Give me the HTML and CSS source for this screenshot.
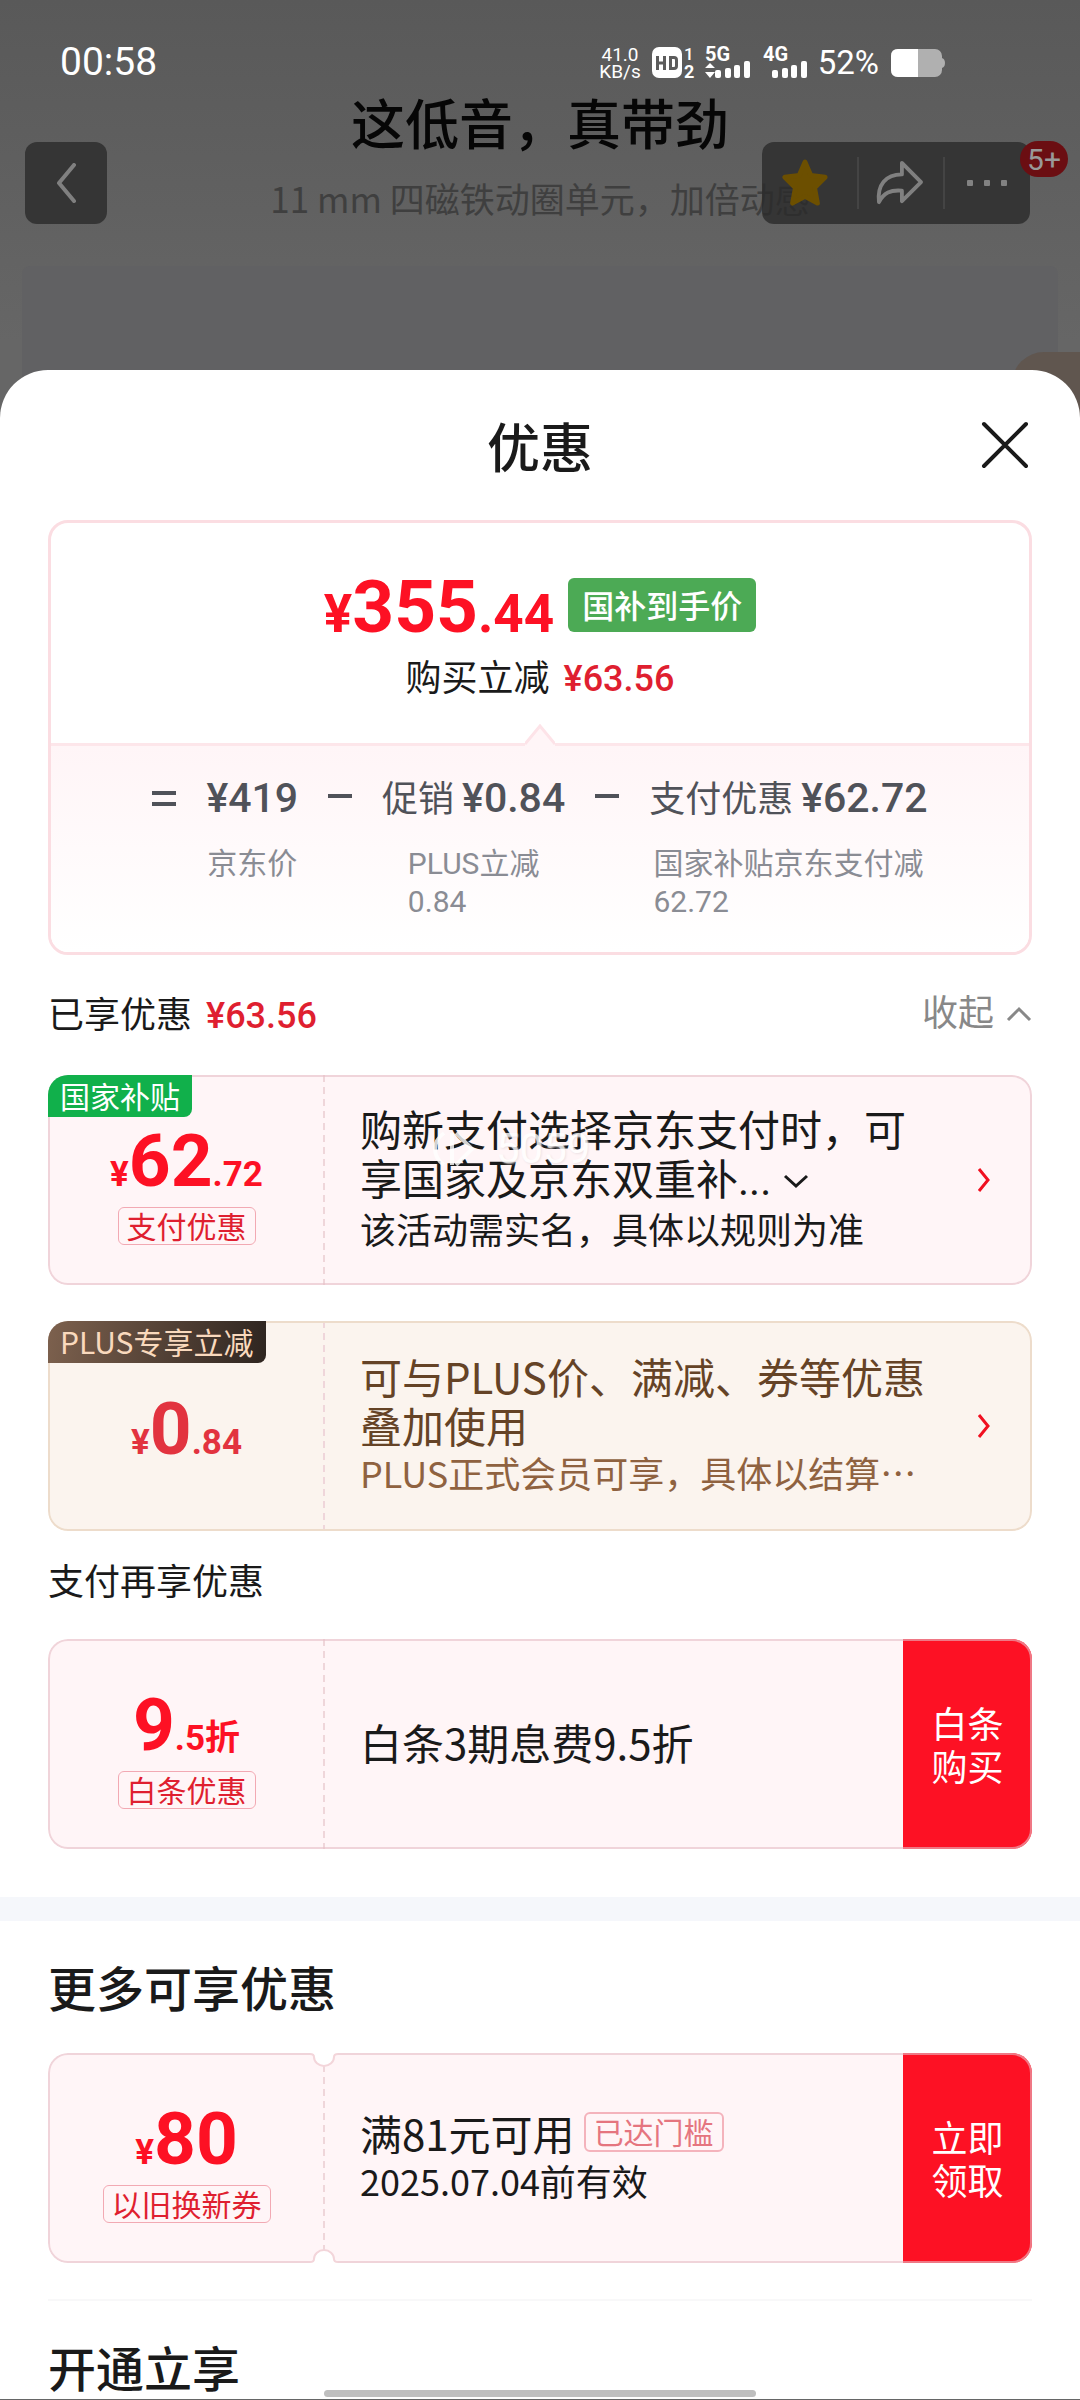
FILE: index.html
```html
<!DOCTYPE html>
<html lang="zh-CN">
<head>
<meta charset="utf-8">
<meta name="viewport" content="width=device-width, initial-scale=1">
<title>优惠</title>
<link rel="stylesheet" href="styles.css">
</head>
<body>
<div class="page">
  <header class="status">
    <time class="clock">00:58</time>
    <div class="status-right">
      <div class="speed"><span>41.0</span><span>KB/s</span></div>
      <svg class="ic-hd" width="44" height="34" viewBox="0 0 44 34" fill="#fff">
        <rect x="1" y="1" width="30" height="31" rx="7"/>
        <g fill="none" stroke="#5c5c5c" stroke-width="3"><path d="M6.500 10v14M13.500 10v14M6.500 17h7"/><path d="M19.500 11.500h3.500q2.500 0 2.500 2.500v6q0 2.500-2.500 2.500h-3.500z"/></g>
        <text x="33" y="14" font-size="17" font-weight="500">1</text><text x="33" y="32" font-size="18" font-weight="700">2</text>
      </svg>
      <svg class="ic-5g" width="46" height="34" viewBox="0 0 46 34" fill="#fff">
        <text x="0" y="15" font-size="20" font-weight="700">5G</text>
        <path d="M5 17l5 5H0zM5 32l-5-6h10z"/>
        <rect x="10" y="24" width="6" height="8" rx="2"/><rect x="20" y="22" width="6" height="10" rx="2"/><rect x="29" y="19" width="6" height="13" rx="2"/><rect x="39" y="15" width="6" height="17" rx="2"/>
      </svg>
      <svg class="ic-4g" width="45" height="34" viewBox="0 0 45 34" fill="#fff">
        <text x="0" y="15" font-size="20" font-weight="700">4G</text>
        <rect x="9" y="24" width="6" height="8" rx="2"/><rect x="19" y="22" width="6" height="10" rx="2"/><rect x="28" y="19" width="6" height="13" rx="2"/><rect x="38" y="15" width="6" height="17" rx="2"/>
      </svg>
      <span class="percent">52%</span>
      <svg class="ic-bat" width="54" height="28" viewBox="0 0 54 28">
        <rect width="51" height="28" rx="7" fill="#b0b0b0"/><path d="M51 9q3 1 3 5t-3 5z" fill="#b0b0b0"/><path d="M7 0h20v28H7q-7 0-7-7V7q0-7 7-7z" fill="#fff"/>
      </svg>
    </div>
  </header>

  <section class="hero">
    <h2 class="hero-title">这低音，真带劲</h2>
    <p class="hero-sub">11 mm 四磁铁动圈单元，加倍动感</p>
    <div class="hero-panel"></div>
    <div class="hero-float"></div>
  </section>

  <nav class="topnav">
    <button class="navbox back" aria-label="返回"><svg width="20" height="40" viewBox="0 0 20 40"><path d="M18 2L3 20l15 18" fill="none" stroke="#808080" stroke-width="4" stroke-linecap="round" stroke-linejoin="round"/></svg></button>
    <div class="navbox tools">
      <button aria-label="收藏"><svg width="48" height="48" viewBox="0 0 48 50"><path d="M24 3l6 14 15 2-11 11 3 16-13-7-13 7 3-16L3 19l15-2z" fill="#6c4f00" stroke="#6c4f00" stroke-width="5" stroke-linejoin="round"/></svg></button>
      <button aria-label="分享"><svg width="50" height="44" viewBox="0 0 50 46"><path d="M27 2l20 20-20 20V31C15 30 8 33 3 43 1 25 10 14 27 14z" fill="none" stroke="#808080" stroke-width="4" stroke-linejoin="round"/></svg></button>
      <button aria-label="更多"><svg width="42" height="8" viewBox="0 0 42 8" fill="#828282"><rect x="1" y="1" width="6" height="6" rx="1"/><rect x="18" y="1" width="6" height="6" rx="1"/><rect x="35" y="1" width="6" height="6" rx="1"/></svg></button>
      <span class="badge">5+</span>
    </div>
  </nav>

  <main class="sheet">
    <div class="sheet-head">
      <h1>优惠</h1>
      <button class="close" aria-label="关闭"><svg width="48" height="48" viewBox="0 0 48 48"><path d="M3 3l42 42M45 3L3 45" stroke="#1a1a1a" stroke-width="4" stroke-linecap="round"/></svg></button>
    </div>

    <section class="summary">
      <div class="summary-top">
        <div class="final"><span class="price big-cents"><i>¥</i><b>355</b><i>.44</i></span><span class="final-tag">国补到手价</span></div>
        <p class="saved">购买立减<em>¥63.56</em></p>
      </div>
      <div class="formula">
        <svg class="notch" width="30" height="22" viewBox="0 0 30 22"><path d="M0 20L15 2l15 18v2H0z" fill="#fff5f7"/><path d="M0 20L15 2l15 18" fill="none" stroke="#fde3e8" stroke-width="3"/></svg>
        <svg class="op" width="24" height="18" viewBox="0 0 24 18" fill="#505259"><rect y="1" width="24" height="4"/><rect y="12" width="24" height="4"/></svg>
        <div class="term"><span class="amount">¥419</span><span class="note">京东价</span></div>
        <svg class="op" width="24" height="18" viewBox="0 0 24 18" fill="#505259"><rect y="4" width="24" height="4"/></svg>
        <div class="term"><span class="amount"><small>促销</small>¥0.84</span><span class="note">PLUS立减<br>0.84</span></div>
        <svg class="op" width="24" height="18" viewBox="0 0 24 18" fill="#505259"><rect y="4" width="24" height="4"/></svg>
        <div class="term"><span class="amount"><small>支付优惠</small>¥62.72</span><span class="note">国家补贴京东支付减<br>62.72</span></div>
      </div>
    </section>

    <div class="row-head">
      <h3>已享优惠<em>¥63.56</em></h3>
      <button class="fold">收起<svg width="26" height="16" viewBox="0 0 26 16"><path d="M2 14L13 3l11 11" fill="none" stroke="#888" stroke-width="3"/></svg></button>
    </div>

    <article class="coupon pink">
      <span class="corner green">国家补贴</span>
      <div class="left"><span class="price"><i>¥</i><b>62</b><i>.72</i></span><span class="chip">支付优惠</span></div>
      <div class="body">
        <p class="main">购新支付选择京东支付时，可<br>享国家及京东双重补<span class="dots">...</span><svg class="more" width="26" height="16" viewBox="0 0 26 16"><path d="M2 3l11 10L24 3" fill="none" stroke="#1a1a1a" stroke-width="3"/></svg></p>
        <p class="sub">该活动需实名，具体以规则为准</p>
        <div class="mark"><svg width="46" height="38" viewBox="0 0 46 38"><path d="M12 3C0 12 0 26 12 35M20 3v32M24 3l16 16-16 16" fill="none" stroke="#fff" stroke-width="4"/></svg>5059</div>
      </div>
      <a class="go" href="#" aria-label="详情"><svg width="16" height="26" viewBox="0 0 16 26"><path d="M3 2l9 11-9 11" fill="none" stroke="#f01020" stroke-width="3"/></svg></a>
    </article>

    <article class="coupon gold">
      <span class="corner plus">PLUS专享立减</span>
      <div class="left"><span class="price"><i>¥</i><b>0</b><i>.84</i></span></div>
      <div class="body">
        <p class="main">可与PLUS价、满减、券等优惠<br>叠加使用</p>
        <p class="sub">PLUS正式会员可享，具体以结算…</p>
      </div>
      <a class="go" href="#" aria-label="详情"><svg width="16" height="26" viewBox="0 0 16 26"><path d="M3 2l9 11-9 11" fill="none" stroke="#f01020" stroke-width="3"/></svg></a>
    </article>

    <div class="row-head second"><h3>支付再享优惠</h3></div>

    <article class="coupon pink">
      <div class="left"><span class="price"><b>9</b><i>.5折</i></span><span class="chip">白条优惠</span></div>
      <div class="body"><p class="main">白条3期息费9.5折</p></div>
      <button class="act">白条<br>购买</button>
    </article>

    <div class="band"></div>

    <h2 class="section">更多可享优惠</h2>
    <article class="coupon pink ticket">
      <div class="left"><span class="price"><i>¥</i><b>80</b></span><span class="chip">以旧换新券</span></div>
      <div class="body">
        <p class="main reach">满81元可用<span class="chip soft">已达门槛</span></p>
        <p class="sub">2025.07.04前有效</p>
      </div>
      <button class="act">立即<br>领取</button>
      <svg class="bite top" width="28" height="15" viewBox="0 0 28 15"><path d="M0 0h28v2q-4 0-4 2a10 9 0 0 1-20 0q0-2-4-2z" fill="#fff"/><path d="M0 1q4 0 4 3a10 9 0 0 0 20 0q0-3 4-3" fill="none" stroke="#f3d5da" stroke-width="2"/></svg>
      <svg class="bite bottom" width="28" height="15" viewBox="0 0 28 15"><path d="M0 0h28v2q-4 0-4 2a10 9 0 0 1-20 0q0-2-4-2z" fill="#fff"/><path d="M0 1q4 0 4 3a10 9 0 0 0 20 0q0-3 4-3" fill="none" stroke="#f3d5da" stroke-width="2"/></svg>
    </article>
    <hr class="rule">
    <h2 class="section last">开通立享</h2>
  </main>
  <div class="homebar"></div>
</div>
</body>
</html>
```
FILE: styles.css
```css
* { box-sizing: border-box; }
body {
  margin: 0;
  font-family: "Noto Sans CJK SC", sans-serif;
  color: #1a1a1a;
}
h1, h2, h3, p { margin: 0; font-weight: 400; }
i, em { font-style: normal; }
button { border: 0; padding: 0; background: none; font: inherit; color: inherit; }
svg { display: block; flex: none; }

.page {
  position: relative;
  min-height: 100vh;
  background: #656565 linear-gradient(#595959, #666 340px) no-repeat;
}

/* status bar */
.status {
  height: 94px;
  padding: 31px 135px 0 60px;
  display: flex;
  justify-content: space-between;
  align-items: flex-start;
  color: #fff;
  font-family: Roboto, sans-serif;
}
.clock { font-size: 39px; line-height: 62px; }
.status-right { display: flex; align-items: center; height: 64px; }
.status-right svg { overflow: visible; }
.status-right text { font-family: Roboto, sans-serif; }
.speed { display: flex; flex-direction: column; align-items: center; font-size: 19px; line-height: 17px; }
.ic-hd { margin-left: 10px; }
.ic-5g { margin-left: 10px; }
.ic-4g { margin-left: 12px; }
.percent { margin-left: 10px; font-size: 33px; line-height: 40px; }
.ic-bat { margin-left: 12px; }

/* dimmed product page */
.hero { position: relative; text-align: center; }
.hero-title { margin-top: -4px; font-size: 54px; line-height: 64px; font-weight: 500; color: #060606; }
.hero-sub { margin-top: 20px; font-size: 35px; line-height: 48px; color: #3f3f3f; }
.hero-panel { height: 152px; margin: 44px 22px 0; background: #616163; border-radius: 8px 8px 0 0; }
.hero-float { position: absolute; right: 0; bottom: 0; width: 68px; height: 66px; background: #60564f; border-radius: 32px 0 0 0; }

.topnav {
  position: absolute;
  top: 142px;
  left: 25px;
  right: 50px;
  display: flex;
  justify-content: space-between;
}
.navbox { position: relative; height: 82px; border-radius: 12px; background: rgba(42, 42, 42, .8); }
.back { width: 82px; display: grid; place-items: center; }
.tools { width: 268px; display: flex; }
.tools button { flex: 1; display: grid; place-items: center; }
.tools button:first-child { padding-right: 8px; }
.tools button + button { background: linear-gradient(#444, #444) left center / 2px 52px no-repeat; }
.badge {
  position: absolute;
  top: -1px;
  right: -38px;
  width: 48px;
  height: 36px;
  border-radius: 18px;
  background: #6b0e12;
  color: #999;
  font: 30px/37px Roboto, sans-serif;
  text-align: center;
}

/* bottom sheet */
.sheet {
  position: relative;
  margin-top: -48px;
  background: #fff;
  border-radius: 48px 48px 0 0;
}
.sheet-head { position: relative; height: 150px; text-align: center; }
.sheet-head h1 { padding-top: 43px; font-size: 53px; line-height: 64px; font-weight: 500; }
.close { position: absolute; top: 51px; right: 51px; }

.summary {
  margin: 0 48px;
  border: 3px solid #fbdde2;
  border-radius: 20px;
  overflow: hidden;
}
.summary-top { height: 220px; padding-top: 48px; text-align: center; }
.final { display: flex; justify-content: center; gap: 14px; height: 70px; }
.price {
  font-family: Roboto, "Noto Sans CJK SC", sans-serif;
  font-weight: 700;
  color: #fd1124;
  line-height: 72px;
  white-space: nowrap;
}
.price i { font-size: 35px; }
.price b { font-size: 73px; font-weight: 700; }
.price.big-cents i { font-size: 53px; }
.final-tag {
  height: 54px;
  margin-top: 7px;
  padding: 0 14px;
  border-radius: 6px;
  background: #4caa55;
  color: #fff;
  font-size: 32px;
  line-height: 53px;
  font-weight: 500;
}
.saved { margin-top: 8px; font-size: 36px; line-height: 52px; }
em { margin-left: 14px; font-family: Roboto, sans-serif; font-weight: 500; color: #df1f30; }
.formula {
  position: relative;
  height: 209px;
  padding-top: 26px;
  border-top: 3px solid #fde6ea;
  background: linear-gradient(#fff5f7, #fff);
  display: flex;
  justify-content: center;
  gap: 30px;
  color: #505259;
}
.notch { position: absolute; top: -22px; left: calc(50% - 15px); }
.op { margin-top: 18px; }
.term { display: flex; flex-direction: column; align-items: center; }
.amount { display: flex; align-items: center; gap: 8px; font: 500 41px/52px Roboto, sans-serif; }
.amount small { font: 36px/48px "Noto Sans CJK SC", sans-serif; padding-bottom: 4px; }
.note { margin-top: 21px; font: 30px/38px Roboto, "Noto Sans CJK SC", sans-serif; color: #8a8c94; }

.row-head { height: 120px; padding: 31px 48px 0; display: flex; justify-content: space-between; }
.row-head h3 { font-size: 36px; line-height: 52px; }
.fold { height: 48px; display: flex; align-items: center; gap: 12px; font-size: 36px; line-height: 48px; color: #888; }
.fold svg { margin-top: 8px; }
.row-head.second { height: 108px; padding-top: 22px; }

/* coupons */
.coupon {
  position: relative;
  display: flex;
  height: 210px;
  margin: 0 48px;
  border-radius: 20px;
  overflow: hidden;
}
.coupon::after {
  content: "";
  position: absolute;
  inset: 0;
  border: 2px solid rgba(230, 190, 198, .6);
  border-radius: 20px;
  pointer-events: none;
}
.pink { background: #fff5f7; }
.gold { background: #fbf4ee; margin-top: 36px; }
.gold::after { border-color: #eddccb; }
.left {
  width: 277px;
  flex: none;
  padding-top: 50px;
  display: flex;
  flex-direction: column;
  align-items: center;
  background: repeating-linear-gradient(#efd6da 0 7px, transparent 7px 12px) right / 2px 100% no-repeat;
}
.gold .left { padding-top: 72px; }
.gold .price { color: #e2333f; }
.left .price { height: 82px; }
.chip {
  height: 38px;
  padding: 0 8px;
  border: 1px solid #f2a9b3;
  border-radius: 6px;
  color: #df1f30;
  font-size: 30px;
  line-height: 34px;
}
.body { position: relative; flex: 1; padding: 0 0 6px 35px; display: flex; flex-direction: column; justify-content: center; white-space: nowrap; }
.main { font-size: 42px; line-height: 49px; }
.sub { font-size: 36px; line-height: 46px; }
.gold .main { color: #654326; }
.gold .sub { color: #8f6240; }
.dots { font-family: Roboto, sans-serif; }
.more { display: inline-block; margin-left: 12px; vertical-align: 6px; }
.go { width: 56px; display: flex; align-items: center; }
.corner {
  position: absolute;
  top: 0;
  left: 0;
  height: 42px;
  padding: 0 12px;
  border-radius: 6px 0 8px 0;
  font-size: 30px;
  line-height: 40px;
  z-index: 1;
}
.green { background: #11b04b; color: #fff; }
.plus { background: linear-gradient(100deg, #7d614e, #2e2520); color: #f9d9bd; }
.act { width: 129px; flex: none; background: #fd1124; color: #fff; font-size: 36px; line-height: 43px; }
.reach { display: flex; align-items: center; gap: 9px; }
.soft { height: 40px; border: 2px solid #f4b3bc; color: #e5757f; }
.bite { position: absolute; left: 262px; z-index: 1; }
.bite.top { top: 0; }
.bite.bottom { bottom: 0; transform: rotate(180deg); }
.mark {
  position: absolute;
  top: 54px;
  left: 107px;
  display: flex;
  align-items: center;
  gap: 18px;
  font: 42px/40px Roboto, sans-serif;
  color: #fff;
  opacity: .8;
  text-shadow: 1px 1px 2px #eadfe1;
}

.band { height: 24px; margin-top: 48px; background: #f5f7fb; }
.section { height: 132px; padding: 33px 48px 0; font-size: 48px; line-height: 64px; font-weight: 500; }
.rule { height: 2px; margin: 36px 48px 0; border: 0; background: #f8f8f9; }
.section.last { height: 98px; }
.homebar {
  position: fixed;
  bottom: 3px;
  left: 30%;
  width: 40%;
  height: 7px;
  border-radius: 4px;
  background: #bfbfbf;
}
```
